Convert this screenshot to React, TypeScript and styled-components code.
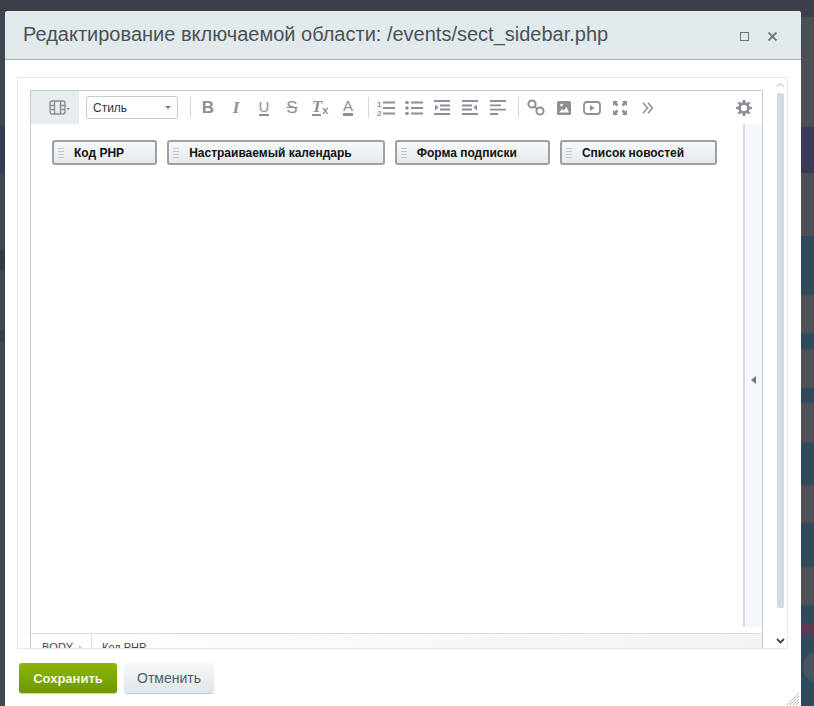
import React from 'react'
import styled, { createGlobalStyle } from 'styled-components'

const GlobalStyle = createGlobalStyle`
  html, body {
    margin: 0;
    padding: 0;
    overflow: hidden;
    background: #3b3f4a;
    font-family: "Liberation Sans", Arial, sans-serif;
  }
  * { box-sizing: border-box; }
`

const Page = styled.div`
  display: flex;
  width: 814px;
  height: 706px;
  overflow: hidden;
`

const Strip = styled.div<{ $width: number }>`
  display: flex;
  flex-direction: column;
  flex: 0 0 ${({ $width }) => $width}px;
  min-width: 0;
  overflow: hidden;
`

const Band = styled.div<{ $height: number; $color: string }>`
  flex: 0 0 ${({ $height }) => $height}px;
  background: ${({ $color }) => $color};
  display: flex;
  align-items: center;
`

const Blob = styled.div`
  flex: 0 0 32px;
  height: 32px;
  margin: -8px 0 0 2px;
  border-radius: 50%;
  background: #47555f;
`

const Middle = styled.div`
  flex: 1;
  display: flex;
  flex-direction: column;
  padding-top: 11px;
  min-width: 0;
`

const Window = styled.div`
  flex: 1;
  display: flex;
  flex-direction: column;
  background: #fff;
  border-radius: 3px 3px 0 0;
  overflow: hidden;
`

const Header = styled.div`
  flex: 0 0 49px;
  display: flex;
  align-items: center;
  justify-content: space-between;
  padding: 0 24px 2px 18px;
  background: #e2e9ec;
  border-bottom: 1px solid #a8afb2;
`

const Title = styled.div`
  font-size: 20px;
  color: #4a5257;
  white-space: nowrap;
`

const WindowControls = styled.div`
  display: flex;
  align-items: center;
  gap: 19px;
  padding-top: 5px;
`

const Body = styled.div`
  flex: 0 0 589px;
  padding: 17px 13px 0 12px;
`

const ContentBox = styled.div`
  display: flex;
  height: 572px;
  padding: 12px 0 0 12px;
  border: 1px solid #e3e9ec;
  overflow: hidden;
`

const Editor = styled.div`
  flex: 0 0 733px;
  height: 580px;
  display: flex;
  flex-direction: column;
  border: 1px solid #c3c8cc;
`

const Toolbar = styled.div`
  flex: 0 0 33px;
  display: flex;
  align-items: center;
  background: #fff;
`

const ModeTab = styled.div`
  align-self: stretch;
  flex: 0 0 48px;
  display: flex;
  align-items: center;
  justify-content: center;
  padding-left: 9px;
  background: #e8edef;
`

const StyleSelect = styled.div`
  width: 92px;
  height: 23px;
  margin: 0 12px 0 7px;
  padding: 0 6px;
  display: flex;
  align-items: center;
  justify-content: space-between;
  font-size: 12px;
  color: #333;
  background: #fff;
  border: 1px solid #c7cdd1;
  border-radius: 2px;
`

const Caret = styled.span`
  width: 0;
  height: 0;
  border-left: 3.5px solid transparent;
  border-right: 3.5px solid transparent;
  border-top: 3.5px solid #777;
`

const Separator = styled.span`
  flex: 0 0 1px;
  height: 21px;
  margin-right: 3px;
  background: #d3d8db;
`

const ToolGroup = styled.div`
  display: flex;
  align-items: center;
  margin-right: 6px;
`

const Tool = styled.span<{ $pushRight?: boolean }>`
  flex: 0 0 28px;
  height: 22px;
  display: flex;
  align-items: center;
  justify-content: center;
  color: #8a9095;
  margin-left: ${({ $pushRight }) => ($pushRight ? 'auto' : '0')};
  margin-right: ${({ $pushRight }) => ($pushRight ? '4px' : '0')};
`

const Letter = styled.span<{
  $serif?: boolean
  $italic?: boolean
  $bold?: boolean
  $line?: string
  $size?: number
}>`
  font-family: ${({ $serif }) => ($serif ? '"Liberation Serif"' : '"Liberation Sans"')}, sans-serif;
  font-style: ${({ $italic }) => ($italic ? 'italic' : 'normal')};
  font-weight: ${({ $bold }) => ($bold ? 700 : 400)};
  font-size: ${({ $size }) => $size || 17}px;
  line-height: 13px;
  color: #8a9095;
  text-decoration: ${({ $line }) => $line || 'none'};
`

const Sub = styled.sub`
  font-size: 11px;
  line-height: 0;
  vertical-align: -2px;
  font-style: normal;
  font-family: "Liberation Sans", sans-serif;
`

const Bar = styled.span<{ $width?: number; $thick?: boolean }>`
  display: block;
  height: ${({ $thick }) => ($thick ? 3 : 2)}px;
  width: ${({ $width }) => ($width ? `${$width}px` : 'auto')};
  margin-top: 1px;
  background: #8a9095;
`

const Main = styled.div`
  flex: 0 0 509px;
  display: flex;
`

const Canvas = styled.div`
  flex: 1;
  display: flex;
  align-items: flex-start;
  gap: 10px;
  padding: 16px 21px;
`

const Chip = styled.div`
  height: 25px;
  display: flex;
  align-items: center;
  gap: 10px;
  padding: 1px 31px 0 4px;
  font-size: 12px;
  font-weight: 700;
  color: #111;
  white-space: nowrap;
  border: 2px solid #9ba1a6;
  border-radius: 3px;
  background: linear-gradient(#f6f8f9, #e5eaed);
`

const Grip = styled.span`
  flex: 0 0 6px;
  height: 11px;
  background: repeating-linear-gradient(#c2c7ca 0 1px, transparent 1px 3px);
`

const SidePanel = styled.div`
  flex: 0 0 19px;
  margin-bottom: 6px;
  padding-top: 8px;
  display: flex;
  align-items: center;
  justify-content: center;
  background: #f5f8fb;
  border-left: 2px solid #d6dbe0;
`

const PanelArrow = styled.span`
  width: 0;
  height: 0;
  border-top: 4px solid transparent;
  border-bottom: 4px solid transparent;
  border-right: 5px solid #6f767a;
`

const StatusBar = styled.div`
  flex: 0 0 28px;
  display: flex;
  font-size: 11px;
  color: #444;
  border-top: 1px solid #d8dde0;
  background: linear-gradient(90deg, #fff, #f1f4f6);
`

const StatusCell = styled.div<{ $wide?: boolean }>`
  flex: ${({ $wide }) => ($wide ? '1' : '0 0 61px')};
  display: flex;
  align-items: flex-start;
  gap: 6px;
  padding: 7px 0 0 ${({ $wide }) => ($wide ? '10px' : '11px')};
  border-right: ${({ $wide }) => ($wide ? '0' : '1px solid #d8dde0')};
`

const StatusArrow = styled.span`
  width: 0;
  height: 0;
  margin-top: 4px;
  border-top: 3px solid transparent;
  border-bottom: 3px solid transparent;
  border-left: 3px solid #c3c8cc;
`

const ScrollColumn = styled.div`
  flex: 1;
  display: flex;
  flex-direction: column;
  align-items: center;
  margin-top: -12px;
  padding: 4px 0 0 11px;
`

const ScrollThumb = styled.div`
  flex: 0 0 515px;
  width: 7px;
  margin: 5px 0 30px;
  border-radius: 2px;
  background: #d0dbe4;
`

const Footer = styled.div`
  display: flex;
  align-items: flex-start;
  gap: 7px;
  padding: 14px 0 0 14px;
  position: relative;
  flex: 1;
`

const Button = styled.div<{ $primary?: boolean }>`
  height: 30px;
  width: ${({ $primary }) => ($primary ? '98px' : '90px')};
  display: flex;
  align-items: center;
  justify-content: center;
  font-size: ${({ $primary }) => ($primary ? '13px' : '14px')};
  font-weight: ${({ $primary }) => ($primary ? 700 : 400)};
  color: ${({ $primary }) => ($primary ? '#f3f7e2' : '#535c62')};
  border-radius: 3px;
  background: ${({ $primary }) =>
    $primary ? 'linear-gradient(#8fb50a, #6c9703)' : 'linear-gradient(#f6f8f9, #dfe6e9)'};
  box-shadow: 0 1px 1px rgba(0, 0, 0, 0.22);
`

const ResizeHandle = styled.svg`
  position: absolute;
  right: 2px;
  bottom: 1px;
`

const leftBands = [
  { height: 11, color: '#3b3f4a' },
  { height: 116, color: '#3e464f' },
  { height: 46, color: '#343a50' },
  { height: 77, color: '#3e4850' },
  { height: 20, color: '#2f3c45' },
  { height: 60, color: '#3e4850' },
  { height: 12, color: '#333f48' },
  { height: 364, color: '#3e4850' },
]

const rightBands = [
  { height: 17, color: '#3b3f4a' },
  { height: 110, color: '#4b5056' },
  { height: 46, color: '#383a58' },
  { height: 63, color: '#4b5056' },
  { height: 59, color: '#2f4a5c' },
  { height: 38, color: '#4e5257' },
  { height: 16, color: '#2f4a5c' },
  { height: 39, color: '#4e5257' },
  { height: 15, color: '#2f4a5c' },
  { height: 39, color: '#4e5257' },
  { height: 43, color: '#2f4a5c' },
  { height: 38, color: '#4e5257' },
  { height: 44, color: '#2f4a5c' },
  { height: 38, color: '#4e5257' },
  { height: 18, color: '#2f4a5c' },
  { height: 12, color: '#5c3a55' },
]

const chips = ['Код PHP', 'Настраиваемый календарь', 'Форма подписки', 'Список новостей']

const FilmIcon = () => (
  <svg width="21" height="15" viewBox="0 0 21 15" fill="none" stroke="#8a9095" strokeWidth="1.4">
    <rect x="1" y="1" width="15" height="13" rx="2" />
    <path d="M5.5 1v13M11.5 1v13M1 5.500h4.500M1 9.500h4.500M11.5 5.500H16M11.5 9.500H16" />
    <path d="M17.500 8h3.500l-1.750 2.200z" fill="#8a9095" stroke="none" />
  </svg>
)

const OrderedIcon = () => (
  <svg width="18" height="16" viewBox="0 0 18 16">
    <text x="0" y="7" fontSize="8" fontFamily="Liberation Sans" fontWeight="700" fill="#8a9095">1</text>
    <text x="0" y="15.500" fontSize="8" fontFamily="Liberation Sans" fontWeight="700" fill="#8a9095">2</text>
    <path d="M6 2.500h12M6 8h12M6 13.500h12" stroke="#8a9095" strokeWidth="2" />
  </svg>
)

const BulletIcon = () => (
  <svg width="18" height="16" viewBox="0 0 18 16" fill="#8a9095">
    <circle cx="2" cy="2.500" r="1.800" />
    <circle cx="2" cy="8" r="1.800" />
    <circle cx="2" cy="13.500" r="1.800" />
    <path d="M6 2.500h12M6 8h12M6 13.500h12" stroke="#8a9095" strokeWidth="2" />
  </svg>
)

const IndentIcon = () => (
  <svg width="16" height="15" viewBox="0 0 16 15" fill="#8a9095">
    <path d="M0 1h16M6 5.500h10M6 9.500h10M0 14h16" stroke="#8a9095" strokeWidth="1.800" />
    <path d="M1 4.500l3.500 3-3.500 3z" />
  </svg>
)

const OutdentIcon = () => (
  <svg width="16" height="15" viewBox="0 0 16 15" fill="#8a9095">
    <path d="M0 1h16M0 5.500h10M0 9.500h10M0 14h16" stroke="#8a9095" strokeWidth="1.800" />
    <path d="M15 4.500l-3.500 3 3.500 3z" />
  </svg>
)

const AlignIcon = () => (
  <svg width="16" height="15" viewBox="0 0 16 15">
    <path d="M0 1h16M0 5.300h11M0 9.600h16M0 14h8" stroke="#8a9095" strokeWidth="1.800" />
  </svg>
)

const LinkIcon = () => (
  <svg width="18" height="17" viewBox="0 0 18 17" fill="none" stroke="#8a9095" strokeWidth="2">
    <circle cx="5" cy="5" r="3.600" />
    <circle cx="13" cy="12" r="3.600" />
    <path d="M7.500 7.500l3 2.500" />
  </svg>
)

const ImageIcon = () => (
  <svg width="14" height="14" viewBox="0 0 14 14">
    <rect width="14" height="14" rx="1.500" fill="#8a9095" />
    <path d="M2 11.500l3-3.500 2 1.500 2.500-3.500 2.500 5.500z" fill="#fff" />
    <circle cx="4.500" cy="4" r="1.300" fill="#fff" />
  </svg>
)

const VideoIcon = () => (
  <svg width="18" height="14" viewBox="0 0 18 14">
    <rect x="1" y="1" width="16" height="12" rx="3" fill="none" stroke="#8a9095" strokeWidth="1.800" />
    <path d="M7 4l4.500 3L7 10z" fill="#8a9095" />
  </svg>
)

const FullscreenIcon = () => (
  <svg width="14" height="14" viewBox="0 0 14 14" fill="#8a9095">
    <path d="M0 0h5L3.500 1.500 5.500 3.500 3.500 5.500 1.500 3.500 0 5z" />
    <path d="M14 0v5L12.500 3.500 10.500 5.500 8.500 3.500 10.500 1.500 9 0z" />
    <path d="M0 14V9l1.500 1.500 2-2 2 2-2 2L5 14z" />
    <path d="M14 14H9l1.500-1.500-2-2 2-2 2 2L14 9z" />
  </svg>
)

const MoreIcon = () => (
  <svg width="12" height="12" viewBox="0 0 12 12" fill="none" stroke="#8a9095" strokeWidth="1.500">
    <path d="M1 .7l4.500 5.300L1 11.300M6 .7l4.500 5.300L6 11.300" />
  </svg>
)

const GearIcon = () => (
  <svg width="16" height="16" viewBox="0 0 17 17" fill="none" stroke="#8a9095">
    <circle cx="8.500" cy="8.500" r="4.800" strokeWidth="3" />
    <path d="M8.500 0v3M8.500 14v3M0 8.500h3M14 8.500h3M2.500 2.500l2 2M12.500 12.500l2 2M14.500 2.500l-2 2M4.500 12.500l-2 2" strokeWidth="2.600" />
  </svg>
)

const App = () => {
  return (
    <>
      <GlobalStyle />
      <Page>
        <Strip $width={5}>
          {leftBands.map((band, index) => (
            <Band key={index} $height={band.height} $color={band.color} />
          ))}
        </Strip>
        <Middle>
          <Window>
            <Header>
              <Title>Редактирование включаемой области: /events/sect_sidebar.php</Title>
              <WindowControls>
                <svg width="9" height="9" viewBox="0 0 9 9" fill="none" stroke="#6b7478" strokeWidth="1">
                  <rect x="0.500" y="0.500" width="8" height="8" />
                </svg>
                <svg width="9" height="9" viewBox="0 0 9 9" stroke="#6b7478" strokeWidth="1.800">
                  <path d="M0.500 0.500l8 8M8.500 0.500l-8 8" />
                </svg>
              </WindowControls>
            </Header>
            <Body>
              <ContentBox>
                <Editor>
                  <Toolbar>
                    <ModeTab>
                      <FilmIcon />
                    </ModeTab>
                    <StyleSelect>
                      Стиль
                      <Caret />
                    </StyleSelect>
                    <Separator />
                    <ToolGroup>
                      <Tool><Letter $bold>B</Letter></Tool>
                      <Tool><Letter $serif $italic $bold>I</Letter></Tool>
                      <Tool><Letter $size={15}>U<Bar /></Letter></Tool>
                      <Tool><Letter $line="line-through">S</Letter></Tool>
                      <Tool><Letter $serif $italic $bold>T<Sub>x</Sub><Bar $width={9} /></Letter></Tool>
                      <Tool><Letter $size={15}>A<Bar $thick /></Letter></Tool>
                    </ToolGroup>
                    <Separator />
                    <ToolGroup>
                      <Tool><OrderedIcon /></Tool>
                      <Tool><BulletIcon /></Tool>
                      <Tool><IndentIcon /></Tool>
                      <Tool><OutdentIcon /></Tool>
                      <Tool><AlignIcon /></Tool>
                    </ToolGroup>
                    <Separator />
                    <ToolGroup>
                      <Tool><LinkIcon /></Tool>
                      <Tool><ImageIcon /></Tool>
                      <Tool><VideoIcon /></Tool>
                      <Tool><FullscreenIcon /></Tool>
                      <Tool><MoreIcon /></Tool>
                    </ToolGroup>
                    <Tool $pushRight><GearIcon /></Tool>
                  </Toolbar>
                  <Main>
                    <Canvas>
                      {chips.map((chip) => (
                        <Chip key={chip}>
                          <Grip />
                          {chip}
                        </Chip>
                      ))}
                    </Canvas>
                    <SidePanel>
                      <PanelArrow />
                    </SidePanel>
                  </Main>
                  <StatusBar>
                    <StatusCell>
                      BODY
                      <StatusArrow />
                    </StatusCell>
                    <StatusCell $wide>Код PHP</StatusCell>
                  </StatusBar>
                </Editor>
                <ScrollColumn>
                  <svg width="9" height="6" viewBox="0 0 9 6" fill="none" stroke="#d3d8dc" strokeWidth="1.500">
                    <path d="M1 5l3.500-3.500L8 5" />
                  </svg>
                  <ScrollThumb />
                  <svg width="9" height="6" viewBox="0 0 9 6" fill="none" stroke="#444" strokeWidth="1.800">
                    <path d="M1 1l3.500 3.500L8 1" />
                  </svg>
                </ScrollColumn>
              </ContentBox>
            </Body>
            <Footer>
              <Button $primary>Сохранить</Button>
              <Button>Отменить</Button>
              <ResizeHandle width="12" height="12" viewBox="0 0 12 12" stroke="#b5babd" strokeWidth="1">
                <path d="M0 12L12 0M3 12l9-9M6 12l6-6M9 12l3-3" />
              </ResizeHandle>
            </Footer>
          </Window>
        </Middle>
        <Strip $width={13}>
          {rightBands.map((band, index) => (
            <Band key={index} $height={band.height} $color={band.color} />
          ))}
          <Band $height={71} $color="#2f4a5c">
            <Blob />
          </Band>
        </Strip>
      </Page>
    </>
  )
}

export default App
